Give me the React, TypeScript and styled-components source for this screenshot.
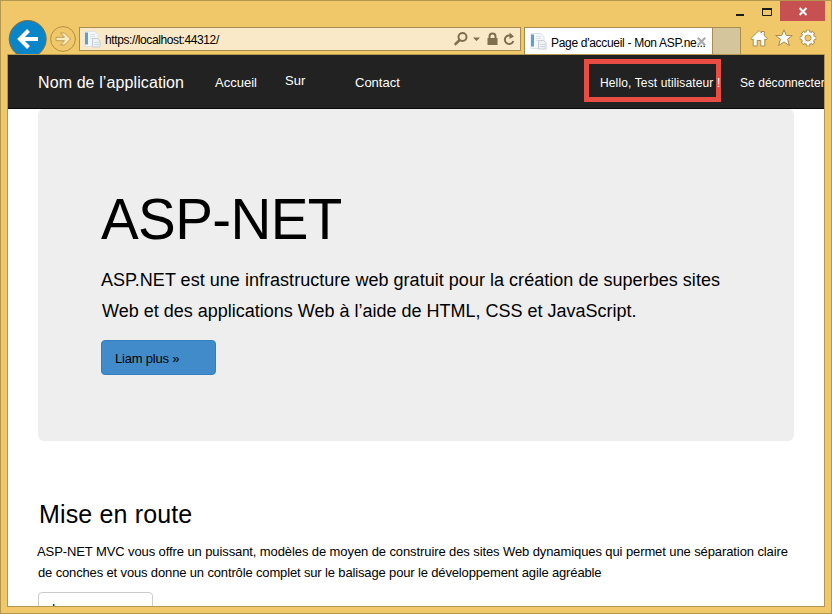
import React from 'react';
import styled, { createGlobalStyle } from 'styled-components';

const Global = createGlobalStyle`
  * { box-sizing: border-box; }
  html, body { margin: 0; padding: 0; overflow: hidden; background: #f0c869; }
  body { font-family: "Liberation Sans", Arial, sans-serif; color: #000; }
`;

const Window = styled.div`
  width: 832px;
  height: 614px;
  display: flex;
  flex-direction: column;
  background: #f0c869;
  border: 1px solid #b3964f;
  padding: 0 6px 6px 6px;
  overflow: hidden;
`;

const Chrome = styled.header`
  height: 53px;
  flex: none;
  display: flex;
  align-items: flex-end;
`;

const BackButton = styled.div`
  flex: none;
  width: 41px;
  height: 35px;
  overflow: hidden;
  svg { display: block; }
`;

const ForwardButton = styled.div`
  flex: none;
  width: 27px;
  height: 28px;
  margin-left: 1px;
  svg { display: block; }
`;

const AddressBar = styled.div`
  flex: none;
  width: 442px;
  height: 24px;
  margin: 0 0 3px 3px;
  display: flex;
  align-items: center;
  background: #f9e9c8;
  border: 1px solid #a98d4e;
  padding-left: 4px;
  svg { display: block; flex: none; }
`;

const Label = styled.span<{ $size: number; $spacing?: number; $top?: number }>`
  display: block;
  white-space: nowrap;
  font-size: ${p => p.$size}px;
  line-height: 1.2;
  letter-spacing: ${p => p.$spacing ?? 0}px;
  margin-top: ${p => p.$top ?? 0}px;
`;

const Url = styled.div`
  flex: none;
  width: 353px;
  padding-left: 4px;
`;

const Tab = styled.div`
  flex: none;
  width: 189px;
  height: 27px;
  margin-left: 3px;
  display: flex;
  align-items: center;
  background: #fff;
  border: 1px solid #a98d4e;
  border-bottom: 0;
  padding-left: 5px;
  svg { display: block; flex: none; }
`;

const TabTitle = styled.div`
  flex: none;
  width: 150px;
  padding-left: 4px;
`;

const NewTab = styled.div`
  flex: none;
  width: 28px;
  height: 27px;
  background: #d5c59c;
  border: 1px solid #a98d4e;
  border-left: 0;
  border-bottom: 0;
`;

const Corner = styled.div`
  flex: none;
  width: 84px;
  height: 53px;
  display: flex;
  flex-direction: column;
  align-items: flex-end;
`;

const Caption = styled.div`
  width: 96px;
  height: 20px;
  display: flex;
  svg { display: block; }
`;

const Close = styled.div`
  width: 45px;
  height: 20px;
  background: #c75050;
`;

const BrowserTools = styled.div`
  display: flex;
  padding: 8px 8px 0 0;
  gap: 6.500px;
  svg { display: block; }
`;

const Page = styled.div`
  width: 818px;
  height: 553px;
  background: #fff;
  border: 1px solid #b3964f;
  overflow: hidden;
`;

const Navbar = styled.nav`
  height: 54px;
  display: flex;
  background: #222;
  border-bottom: 1px solid #080808;
  color: #fff;
  padding-left: 30px;
  overflow: hidden;
`;

const NavItem = styled.div<{ $width: number; $top: number }>`
  flex: none;
  width: ${p => p.$width}px;
  padding-top: ${p => p.$top}px;
`;

const Greeting = styled.div`
  flex: none;
  width: 137px;
  height: 43px;
  margin: 4px 19px 0 0;
  border: 5px solid #e84c43;
  padding: 12px 0 0 11px;
`;

const Jumbotron = styled.section`
  width: 756px;
  height: 332px;
  margin-left: 30px;
  padding: 75px 63px 0;
  background: #eee;
  border-radius: 6px;
`;

const Heading = styled.h1`
  margin: 0;
  height: 81px;
  font-size: 56.500px;
  font-weight: 400;
  line-height: 71px;
  letter-spacing: -0.6px;
`;

const Lead = styled.p<{ $indent?: number; $spacing: number }>`
  margin: 0 0 0 ${p => p.$indent ?? 0}px;
  white-space: nowrap;
  font-size: 18px;
  line-height: 31px;
  letter-spacing: ${p => p.$spacing}px;
`;

const PrimaryButton = styled.div`
  width: 115px;
  height: 35px;
  margin-top: 13px;
  padding: 10px 13px;
  background: #428bca;
  border: 1px solid #357ebd;
  border-radius: 4px;
`;

const Section = styled.section`
  padding: 56px 0 0 30px;
`;

const SectionTitle = styled.h2`
  margin: 0 0 10px 1px;
  font-size: 25px;
  font-weight: 400;
  line-height: 34px;
  letter-spacing: 0.15px;
`;

const Body = styled.p<{ $spacing: number; $indent: number }>`
  margin: 0 0 0 ${p => p.$indent}px;
  white-space: nowrap;
  font-size: 13px;
  line-height: 21px;
  letter-spacing: ${p => p.$spacing}px;
`;

const OutlineButton = styled.div`
  width: 115px;
  height: 35px;
  margin-top: 9px;
  padding: 8px 13px;
  background: #fff;
  border: 1px solid #ccc;
  border-radius: 4px;
`;

const PageIcon = () => (
  <svg width="17" height="17" viewBox="0 0 17 17">
    <path d="M1 .5h10l3 3v12H1z" fill="#f4f7fa" stroke="#dde2e8" />
    <path d="M1 1.500h3v12H1z" fill="#5ca2ce" />
    <path d="M6 3.500h5M6 5.500h5M6 7.500h2" stroke="#dbe2ea" />
    <path d="M8.500 7.500h5l2.500 2.500v6h-7.500z" fill="#eef2f6" stroke="#c6cdd7" />
    <path d="M10 11.500h5M10 13.500h5" stroke="#d0d8e0" />
  </svg>
);

const GearIcon = () => (
  <svg width="18" height="18" viewBox="0 0 18 18">
    <g fill="none">
      <path
        d="M9 .8v16.400M.8 9h16.400M3.200 3.200l11.600 11.600M14.800 3.200L3.200 14.800"
        stroke="#a98d4e"
        strokeWidth="4.200"
      />
      <circle cx="9" cy="9" r="4.900" stroke="#a98d4e" strokeWidth="4" />
      <path
        d="M9 1.500v15M1.500 9h15M3.800 3.800l10.400 10.400M14.200 3.800L3.800 14.200"
        stroke="#fff"
        strokeWidth="2.500"
      />
      <circle cx="9" cy="9" r="4.700" stroke="#fff" strokeWidth="2.800" />
    </g>
    <circle cx="9" cy="9" r="3.100" fill="#f0c869" stroke="#a98d4e" strokeWidth=".9" />
  </svg>
);

export default function App() {
  return (
    <>
      <Global />
      <Window>
        <Chrome>
          <BackButton>
            <svg width="41" height="40" viewBox="0 0 41 40">
              <circle cx="20.700" cy="20" r="18.500" fill="#0a86c8" stroke="#806c43" />
              <path d="M12.500 20H31M21.500 11.500L13 20L21.500 28.500" fill="none" stroke="#fff" strokeWidth="4" />
            </svg>
          </BackButton>
          <ForwardButton>
            <svg width="27" height="27" viewBox="0 0 27 27">
              <circle cx="14" cy="13" r="12.400" fill="none" stroke="#b08f45" />
              <path
                d="M7 11.300h8.500l-3.800-4.300h3.800l6 6l-6 6h-3.800l3.800-4.300H7z"
                fill="#fbe9c0"
                stroke="#b08f45"
                strokeWidth=".8"
              />
            </svg>
          </ForwardButton>
          <AddressBar>
            <PageIcon />
            <Url><Label $size={12} $spacing={-0.4} $top={3}>https://localhost:44312/</Label></Url>
            <svg width="62" height="16" viewBox="0 0 62 16">
              <g fill="none" stroke="#806f4c" strokeWidth="2">
                <circle cx="8.500" cy="6" r="4" />
                <path d="M5.700 9L.7 13.800" strokeWidth="2.500" />
                <path d="M35.500 8V5.500a3 3 0 0 1 6 0V8" />
                <path d="M57.800 5.300A4.300 4.300 0 1 0 59.300 10" />
              </g>
              <path d="M19 6.500h7l-3.500 3.500zM33.500 7h10v7h-10zM55.500 1.500L60 5.500L55.500 8z" fill="#806f4c" />
            </svg>
          </AddressBar>
          <Tab>
            <PageIcon />
            <TabTitle><Label $size={12} $spacing={-0.3} $top={4}>Page d'accueil - Mon ASP.ne...</Label></TabTitle>
            <svg width="9" height="9" viewBox="0 0 9 9">
              <path d="M.8 .8l7.400 7.400M8.200 .8L.8 8.200" stroke="#aaa" strokeWidth="2.200" />
            </svg>
          </Tab>
          <NewTab />
          <Corner>
            <Caption>
              <svg width="51" height="20" viewBox="0 0 51 20">
                <path d="M7 13h8v2H7z" fill="#1b1b1b" />
                <path d="M33.500 7.500h9v7h-9z" fill="none" stroke="#1b1b1b" />
                <path d="M33 8h10" stroke="#1b1b1b" strokeWidth="2" />
              </svg>
              <Close>
                <svg width="45" height="20" viewBox="0 0 45 20">
                  <path d="M19.500 7l7 7M26.500 7l-7 7" stroke="#fff" strokeWidth="2" />
                </svg>
              </Close>
            </Caption>
            <BrowserTools>
              <svg width="18" height="18" viewBox="0 0 18 18">
                <path
                  d="M.8 9.500L9 1.500l2.500 2.500V2.500H14.300v4.200l3 2.800l-1.300 1.500l-1.200-.9V17h-4v-5.500H7.200V17H3.200v-6.900L2 11z"
                  fill="#fff"
                  stroke="#a98d4e"
                />
              </svg>
              <svg width="18" height="18" viewBox="0 0 18 18">
                <path d="M9 .8l2.300 5.700h6l-4.800 3.800l1.900 6.300L9 12.900L3.600 16.600l1.900-6.300L.7 6.500h6z" fill="#fff" stroke="#a98d4e" />
              </svg>
              <GearIcon />
            </BrowserTools>
          </Corner>
        </Chrome>
        <Page>
          <Navbar>
            <NavItem $width={177} $top={18}><Label $size={16} $spacing={0.1}>Nom de l’application</Label></NavItem>
            <NavItem $width={70} $top={20}><Label $size={13}>Accueil</Label></NavItem>
            <NavItem $width={70} $top={18}><Label $size={13}>Sur</Label></NavItem>
            <NavItem $width={229} $top={20}><Label $size={13}>Contact</Label></NavItem>
            <Greeting><Label $size={12} $spacing={0.13}>Hello, Test utilisateur !</Label></Greeting>
            <NavItem $width={90} $top={21}><Label $size={12} $spacing={0.05}>Se déconnecter</Label></NavItem>
          </Navbar>
          <Jumbotron>
            <Heading>ASP-NET</Heading>
            <Lead $spacing={0.03}>ASP.NET est une infrastructure web gratuit pour la création de superbes sites</Lead>
            <Lead $indent={1} $spacing={0}>Web et des applications Web à l’aide de HTML, CSS et JavaScript.</Lead>
            <PrimaryButton><Label $size={13} $spacing={-0.2}>Liam plus »</Label></PrimaryButton>
          </Jumbotron>
          <Section>
            <SectionTitle>Mise en route</SectionTitle>
            <Body $spacing={-0.098} $indent={-1}>ASP-NET MVC vous offre un puissant, modèles de moyen de construire des sites Web dynamiques qui permet une séparation claire</Body>
            <Body $spacing={-0.145} $indent={0}>de conches et vous donne un contrôle complet sur le balisage pour le développement agile agréable</Body>
            <OutlineButton><Label $size={13}>L</Label></OutlineButton>
          </Section>
        </Page>
      </Window>
    </>
  );
}
